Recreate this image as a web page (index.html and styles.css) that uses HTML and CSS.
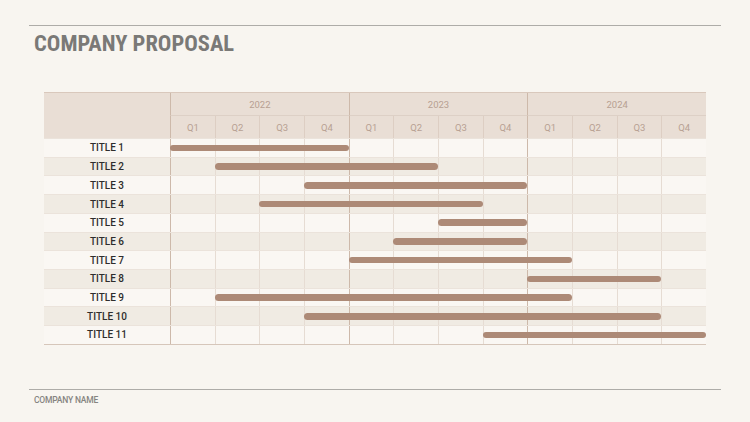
FILE: index.html
```html
<!DOCTYPE html>
<html>
<head>
<meta charset="utf-8">
<link rel="stylesheet" href="styles.css">
</head>
<body>
<div class="page">
  <div class="rule"></div>
  <h1 class="title">COMPANY PROPOSAL</h1>
  <div class="gantt">
    <div class="head">
      <div class="head-label"></div>
      <div class="year">2022</div>
      <div class="year">2023</div>
      <div class="year">2024</div>
      <div class="q ys">Q1</div><div class="q">Q2</div><div class="q">Q3</div><div class="q">Q4</div>
      <div class="q ys">Q1</div><div class="q">Q2</div><div class="q">Q3</div><div class="q">Q4</div>
      <div class="q ys">Q1</div><div class="q">Q2</div><div class="q">Q3</div><div class="q">Q4</div>
    </div>
    <div id="rows"></div>
  </div>
  <div class="rule foot-rule"></div>
  <div class="company">COMPANY NAME</div>
</div>
<script src="app.js"></script>
</body>
</html>
```
FILE: app.js
```js
var data = [
  [1, 5], [2, 7], [4, 9], [3, 8], [7, 9], [6, 9],
  [5, 10], [9, 12], [2, 10], [4, 12], [8, 13]
];
var rows = document.getElementById('rows');
data.forEach(function (d, i) {
  var row = document.createElement('div');
  row.className = 'row' + (i % 2 ? ' alt' : '');
  var label = document.createElement('div');
  label.className = 'label';
  label.textContent = 'TITLE ' + (i + 1);
  row.appendChild(label);
  var track = document.createElement('div');
  track.className = 'track';
  var lines = document.createElement('div');
  lines.className = 'lines';
  for (var k = 0; k < 12; k++) {
    var c = document.createElement('div');
    c.className = 'cell' + (k % 4 === 0 ? ' ys' : '');
    lines.appendChild(c);
  }
  var layer = document.createElement('div');
  layer.className = 'bars';
  var bar = document.createElement('div');
  bar.className = 'bar';
  bar.style.gridColumn = d[0] + ' / ' + d[1];
  layer.appendChild(bar);
  track.appendChild(lines);
  track.appendChild(layer);
  row.appendChild(track);
  rows.appendChild(row);
});
```
FILE: styles.css
```css
* { box-sizing: border-box; }
html, body { margin: 0; padding: 0; }
body {
  background: #f8f5f0;
  font-family: Roboto, "Liberation Sans", sans-serif;
  width: 750px;
  height: 422px;
  overflow: hidden;
}
.page {
  padding: 25px 0 0 29px;
  width: 721px;
}
.rule {
  height: 1px;
  background: #aeaca8;
  width: 692px;
}
.title {
  margin: 6px 0 0 5px;
  font-family: "Roboto Condensed", Roboto, "Liberation Sans", sans-serif;
  font-size: 22.5px;
  line-height: 23px;
  font-weight: 700;
  color: #7a7977;
  letter-spacing: 0;
}
.gantt {
  margin: 37px 0 0 15px;
  width: 662px;
}
.head {
  display: grid;
  grid-template-columns: 126px repeat(12, 1fr);
  grid-template-rows: 23px 22px;
  background: #e9ded5;
  border-top: 1.5px solid #d9c8bc;
  color: #b7a092;
  font-size: 9.5px;
}
.head-label { grid-row: 1 / 3; }
.year {
  grid-column: span 4;
  display: flex;
  align-items: center;
  justify-content: center;
  border-left: 1.5px solid #cdb9aa;
  border-bottom: 1px solid #ddd0c6;
}
.q {
  display: flex;
  align-items: center;
  justify-content: center;
  border-left: 1px solid #ddcec3;
}
.q.ys, .cell.ys { border-left: 1.5px solid #cdb9aa; }
.row {
  display: grid;
  grid-template-columns: 126px 1fr;
  height: 18.73px;
  background: #faf7f3;
  border-top: 1px solid #ebe3db;
}
.row.alt { background: #f0ebe3; }
.row:last-child { border-bottom: 1.5px solid #d6c6ba; height: 19.5px; }
.label {
  display: flex;
  align-items: center;
  justify-content: center;
  font-size: 10px;
  font-weight: 500;
  color: #2e2d2c;
}
.track {
  display: grid;
}
.lines, .bars {
  grid-area: 1 / 1;
  display: grid;
  grid-template-columns: repeat(12, 1fr);
}
.cell { border-left: 1px solid #e6dcd3; }
.bars { align-items: center; }
.bar {
  height: 6.5px;
  border-radius: 4px;
  background: #ad8a77;
}
.foot-rule { margin-top: 44px; }
.company {
  margin: 5px 0 0 5px;
  font-size: 8.5px;
  line-height: 11px;
  font-weight: 500;
  letter-spacing: -0.2px;
  color: #868481;
}
```
